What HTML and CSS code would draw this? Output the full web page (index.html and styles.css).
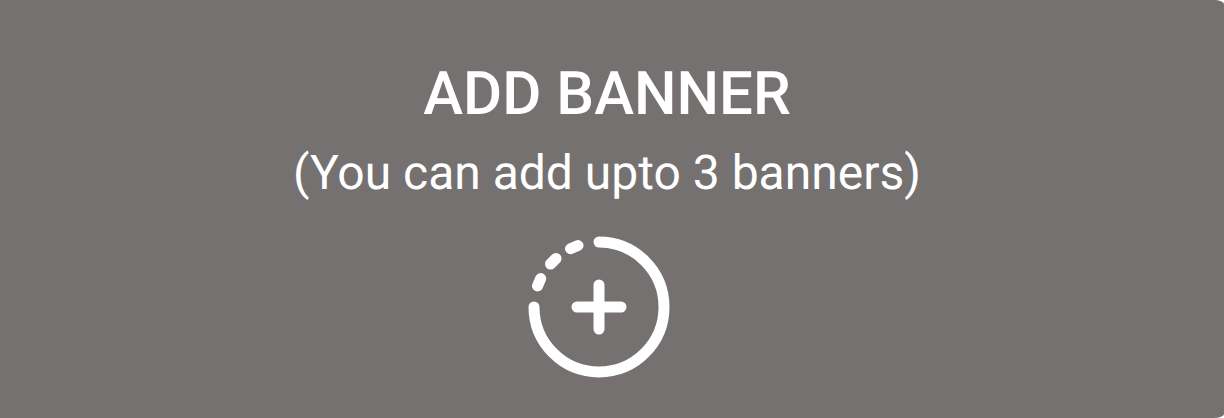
FILE: index.html
```html
<!DOCTYPE html>
<html lang="en">
<head>
<meta charset="utf-8">
<title>Add banner</title>
<link rel="stylesheet" href="styles.css">
</head>
<body>
<button class="banner" type="button">
  <span class="title">ADD BANNER</span>
  <span class="hint">(You can add upto 3 banners)</span>
  <svg class="icon" viewBox="0 0 142 142" aria-hidden="true">
    <path d="M71 6A65 65 0 1 1 6 71M9.5 50L12.7 42.5M22.5 28L28 22.5M42.5 12.7L50 9.5M71 49V93M49 71H93"/>
  </svg>
</button>
</body>
</html>
```
FILE: styles.css
```css
body {
  margin: 0;
  background: #fff;
}

.banner {
  display: flex;
  flex-direction: column;
  align-items: center;
  width: 100%;
  min-height: 100vh;
  margin: 0;
  padding: 60px 24px 40px 14px;
  border: 0;
  border-radius: 0 10px 10px 0 / 0 4px 4px 0;
  background: #757170;
  color: #fff;
  font-family: Roboto, sans-serif;
  text-rendering: geometricPrecision;
  cursor: pointer;
}

.title {
  font-size: 60px;
  font-weight: 500;
  line-height: 68px;
}

.hint {
  font-size: 48px;
  line-height: 56px;
  margin-top: 17px;
}

.icon {
  width: 142px;
  height: 142px;
  margin-top: 35px;
  margin-right: 16px;
  fill: none;
  stroke: #fff;
  stroke-width: 11;
  stroke-linecap: round;
}
```
